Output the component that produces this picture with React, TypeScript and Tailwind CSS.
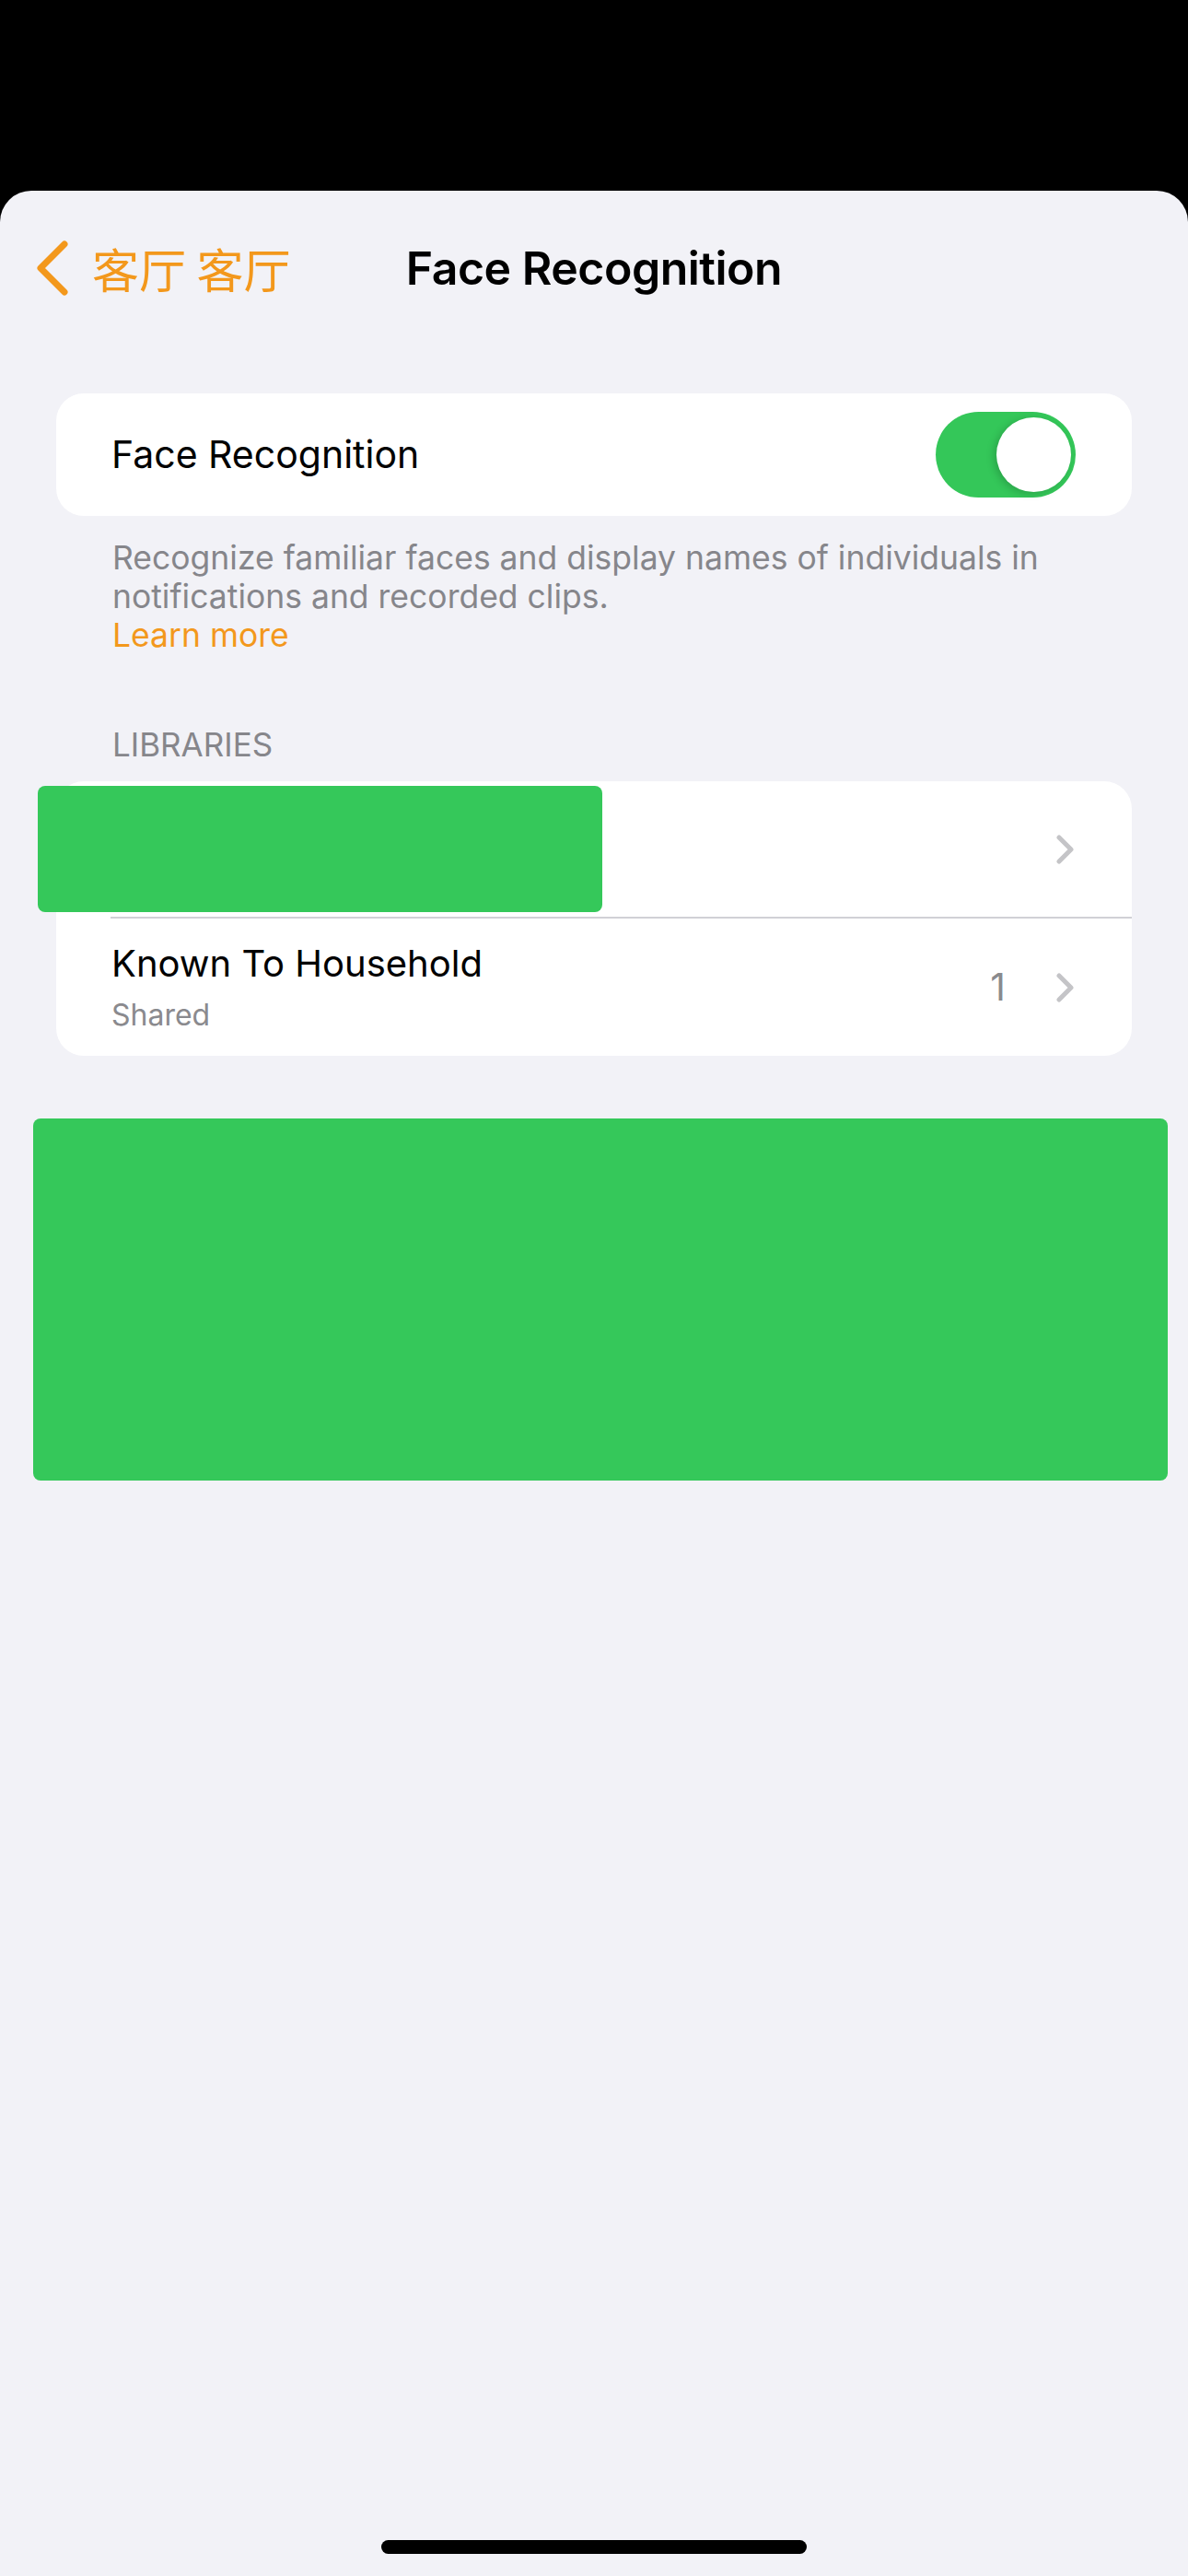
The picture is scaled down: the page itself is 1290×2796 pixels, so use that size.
import React from "react";

function Chevron() {
  return (
    <svg width="20" height="32" viewBox="0 0 20 32" fill="none" className="shrink-0">
      <polyline
        points="3,3 16,16 3,29"
        stroke="#c4c4c7"
        strokeWidth="5"
        strokeLinecap="round"
        strokeLinejoin="round"
      />
    </svg>
  );
}

function Toggle() {
  return (
    <div className="relative w-[152px] h-[93px] rounded-full bg-[#34c759] shrink-0">
      <div className="absolute right-[5px] top-[6px] w-[81px] h-[81px] rounded-full bg-white shadow-[-3px_2px_8px_rgba(0,0,0,0.18)]" />
    </div>
  );
}

export default function App() {
  return (
    <div className="w-[1290px] h-[2796px] bg-black flex flex-col font-['Inter','Noto_Sans_CJK_SC',sans-serif]">
      {/* status bar area */}
      <div className="h-[207px] shrink-0" />

      {/* sheet */}
      <div className="flex-1 flex flex-col bg-[#f2f2f7] rounded-t-[34px]">
        {/* Nav bar */}
        <div className="grid grid-cols-[1fr_auto_1fr] items-center h-[88px] mt-[40px]">
          <div className="flex items-center pl-[38px]">
            <svg width="40" height="62" viewBox="0 0 40 62" fill="none">
              <polyline
                points="32,5 6,31 32,57"
                stroke="#f3981c"
                strokeWidth="7"
                strokeLinecap="round"
                strokeLinejoin="round"
              />
            </svg>
            <span className="ml-[22px] text-[51px] leading-none text-[#f3981c] font-['Noto_Sans_CJK_SC',sans-serif]">
              客厅 客厅
            </span>
          </div>
          <div className="text-[50px] leading-none font-semibold text-black tracking-[-0.5px]">
            Face Recognition
          </div>
          <div />
        </div>

        {/* Face Recognition toggle card */}
        <div className="mt-[92px] mx-[61px] h-[133px] bg-white rounded-[30px] flex items-center justify-between pl-[60px] pr-[61px]">
          <span className="text-[41px] text-black leading-none">Face Recognition</span>
          <Toggle />
        </div>

        {/* Footer description */}
        <div className="mt-[25px] pl-[122px] pr-[100px] text-[35.5px] leading-[42px] text-[#86868b]">
          <p>Recognize familiar faces and display names of individuals in notifications and recorded clips.</p>
          <p className="text-[#f3981c]">Learn more</p>
        </div>

        {/* Libraries header */}
        <div className="mt-[76px] pl-[122px] text-[35px] leading-[42px] text-[#86868b] uppercase">
          Libraries
        </div>

        {/* Libraries card */}
        <div className="relative mt-[19px] mx-[61px] bg-white rounded-[30px]">
          <div className="h-[147px] flex items-center justify-end pr-[62px]">
            <Chevron />
          </div>
          <div className="ml-[59px] h-[2px] bg-[#d1d1d6]" />
          <div className="h-[149px] flex items-center justify-between pl-[60px] pr-[62px]">
            <div className="flex flex-col">
              <span className="text-[40px] leading-none text-black">Known To Household</span>
              <span className="mt-[20px] text-[32px] leading-none text-[#8a8a8e]">Shared</span>
            </div>
            <div className="flex items-center gap-[55px]">
              <span className="text-[41px] leading-none text-[#8a8a8e]">1</span>
              <Chevron />
            </div>
          </div>
          {/* redaction over first row */}
          <div className="absolute left-[-20px] top-[5px] w-[613px] h-[137px] rounded-[8px] bg-[#35c85a]" />
        </div>

        {/* redaction block */}
        <div className="mt-[68px] ml-[36px] mr-[22px] h-[393px] rounded-[8px] bg-[#35c85a]" />

        <div className="flex-1" />

        {/* home indicator */}
        <div className="mb-[24px] mx-auto w-[462px] h-[15px] rounded-full bg-black" />
      </div>
    </div>
  );
}
